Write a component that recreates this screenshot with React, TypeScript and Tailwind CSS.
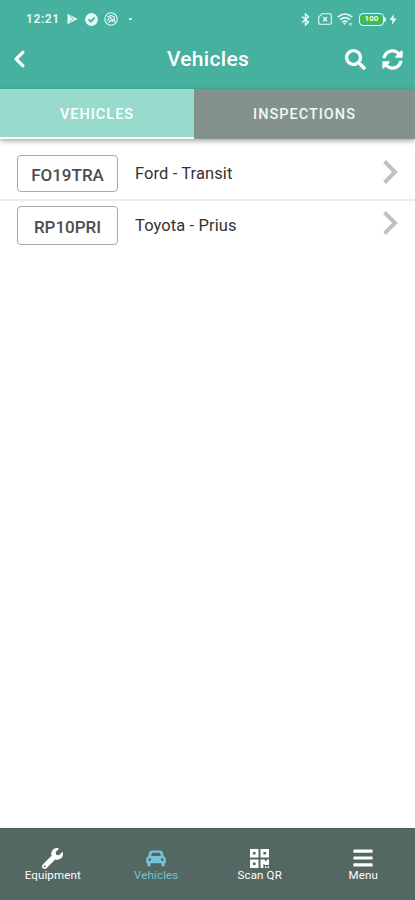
import type { ReactNode } from "react";
import { FaBars, FaChevronLeft, FaSearch, FaSyncAlt, FaWrench } from "react-icons/fa";

type Vehicle = { plate: string; name: string; box: string; row: string; label: string };

const VEHICLES: Vehicle[] = [
  {
    plate: "FO19TRA",
    name: "Ford - Transit",
    box: "h-[37px]",
    row: "h-[62px] border-b-2 border-[#ececec] pt-[16px]",
    label: "h-[39px]",
  },
  {
    plate: "RP10PRI",
    name: "Toyota - Prius",
    box: "h-[39px]",
    row: "h-[52px] pt-[5px]",
    label: "h-[41px]",
  },
];

function StatusBar() {
  return (
    <div className="flex h-[38px] items-center pl-[26px] pr-[18px] text-[#e6fbf5]">
      <span className="w-[34px] whitespace-nowrap text-[12px] font-semibold leading-none tracking-[0.6px]">12:21</span>
      {/* Play store */}
      <svg className="ml-[7px] h-3 w-[11px]" viewBox="0 0 11 12" fill="currentColor">
        <path d="M0.5 0.8 10.8 6 0.5 11.2Z" />
        <path d="M2.5 2.5 6.2 6 2.5 9.5" fill="none" stroke="#45b19e" strokeWidth="0.8" />
      </svg>
      {/* Verified */}
      <svg className="ml-[7px] h-[13px] w-[13px]" viewBox="0 0 13 13">
        <circle cx="6.5" cy="6.5" r="6.4" fill="currentColor" />
        <path d="M3.6 6.4 5.8 8.6 9.7 4.6" fill="none" stroke="#45b19e" strokeWidth="1.8" />
      </svg>
      {/* Aperture */}
      <svg className="ml-[6px] h-[14px] w-[14px]" viewBox="0 0 14 14" fill="none" stroke="currentColor">
        <circle cx="7" cy="7" r="6.2" strokeWidth="1.1" />
        <path d="M3.4 5.2 7 3.4 10.4 5 10.2 8.6M3 8.6 6.4 5.6 11 10M4.4 11 6.2 8.4 9 9.4" strokeWidth="1.2" />
      </svg>
      <span className="ml-[11px] h-[2px] w-[3px] rounded-full bg-current" />

      <div className="ml-auto flex items-center">
        <svg className="h-[13px] w-[9px]" viewBox="0 0 9 13" fill="none" stroke="currentColor" strokeWidth="1.4">
          <path d="M1 3.5 7.5 9 4.5 12V1L7.5 4 1 9.5" />
        </svg>
        {/* No SIM */}
        <svg className="ml-[8px] h-3 w-[14px]" viewBox="0 0 14 12" fill="none" stroke="currentColor">
          <path d="M4.2 0.7H12Q13.3 0.7 13.3 2V10Q13.3 11.3 12 11.3H2Q0.7 11.3 0.7 10V4Z" strokeWidth="1.1" />
          <path d="M5.2 4 9 8.3M9 4 5.2 8.3" strokeWidth="1.3" />
        </svg>
        <svg className="ml-[5px] h-[13px] w-[16px]" viewBox="0 0 16 13" fill="none" stroke="currentColor" strokeWidth="1.5">
          <path d="M0.7 4.1Q8-2 15.3 4.1M3 6.8Q8 2.4 13 6.8M5.2 9.2Q8 6.8 10.5 9" />
          <path d="M6 9.8H9.4L7.7 12Z" fill="currentColor" stroke="none" />
          <path d="M11.8 12.6 15 9.8M12 10 14.6 12.6" strokeWidth="0.9" />
        </svg>
        <div className="ml-[6px] flex h-[13px] w-[25px] items-center rounded-[4px] border-[1.5px] border-current p-px">
          <div className="flex h-full w-full items-center justify-center rounded-[2px] bg-[#48bd2e] text-[8px] font-bold leading-none">
            100
          </div>
        </div>
        <span className="h-[5px] w-[2px] rounded-r-sm bg-current" />
        <svg className="ml-[3px] h-[11px] w-[8px]" viewBox="0 0 7 11" fill="currentColor">
          <path d="M4.6 0 0 6H3L2.3 11 7 4.5H4Z" />
        </svg>
      </div>
    </div>
  );
}

function CarIcon() {
  return (
    <svg className="mt-[1px] h-[17px] w-[20px]" viewBox="0 0 20 17" fill="currentColor" fillRule="evenodd">
      <path d="M5.6 0.5H14.4Q16.2 0.5 16.7 2.3L17.8 6.2Q19.8 6.7 19.8 8.8V13.2H18.6V14.9Q18.6 16.6 17 16.6T15.4 14.9V13.2H4.6V14.9Q4.6 16.6 3 16.6T1.4 14.9V13.2H0.2V8.8Q0.2 6.7 2.2 6.2L3.3 2.3Q3.8 0.5 5.6 0.5ZM6 2.8 5 6.1H15L14 2.8ZM3.7 8.3A1.4 1.4 0 1 0 3.7 11.1 1.4 1.4 0 1 0 3.7 8.3ZM16.3 8.3A1.4 1.4 0 1 0 16.3 11.1 1.4 1.4 0 1 0 16.3 8.3Z" />
    </svg>
  );
}

function QrIcon() {
  return (
    <svg className="h-[19px] w-[19px]" viewBox="0 0 19 19" fill="currentColor" fillRule="evenodd">
      <path d="M0 0H8.5V8.5H0ZM2.9 2.9V5.6H5.6V2.9Z" />
      <path d="M10.5 0H19V8.5H10.5ZM13.4 2.9V5.6H16.1V2.9Z" />
      <path d="M0 10.5H8.5V19H0ZM2.9 13.4V16.1H5.6V13.4Z" />
      <path d="M10.5 10.5H14.4L15.6 12.2H16.6V10.5H19V16H14.8L13.4 14.4V19H10.5ZM15 17.2H16.4V19H15ZM17.5 17.2H19V19H17.5Z" />
    </svg>
  );
}

function NavItem({ icon, label, active }: { icon: ReactNode; label: string; active?: boolean }) {
  return (
    <button className={`flex w-[103.75px] flex-col items-center ${active ? "text-[#75c3d6]" : "text-white"}`}>
      <span className="flex h-[20px] items-center">{icon}</span>
      <span className="mt-px text-[11.5px] leading-[13px] tracking-[0.15px]">{label}</span>
    </button>
  );
}

export default function App() {
  return (
    <div className="flex h-[900px] w-[415px] flex-col overflow-hidden bg-white font-['Roboto',sans-serif]">
      <header className="h-[89px] shrink-0 bg-[#45b19e] text-white">
        <StatusBar />
        <div className="grid h-[42px] grid-cols-[70px_1fr_70px] items-center">
          <button aria-label="Back" className="pl-[11px]">
            <FaChevronLeft className="h-[20px] w-[17px]" />
          </button>
          <h1 className="pl-px text-center text-[21px] font-medium leading-none tracking-[0.3px]">Vehicles</h1>
          <div className="flex items-center">
            <button aria-label="Search">
              <FaSearch className="h-[21px] w-[21px]" />
            </button>
            <button aria-label="Refresh" className="ml-[16px]">
              <FaSyncAlt className="h-[21px] w-[21px]" />
            </button>
          </div>
        </div>
      </header>

      <nav className="z-10 flex h-[50px] shrink-0 text-[14.5px] font-medium tracking-[1px] text-white shadow-[0_2px_5px_rgba(0,0,0,0.35)]">
        <button className="w-[194px] border-b-2 border-white bg-[#98dacc] pt-[3px]">VEHICLES</button>
        <button className="flex-1 bg-[#84928e] pt-[2px] text-[#f1f8f6]">INSPECTIONS</button>
      </nav>

      <main className="flex-1">
        {VEHICLES.map((v) => (
          <div key={v.plate} className={`flex items-start px-[17px] ${v.row}`}>
            <div
              className={`flex w-[101px] items-center justify-center rounded-[4px] border-[1.5px] border-[#a8a8a8] pt-[4px] text-[17px] font-medium text-[#4d4d4d] ${v.box}`}
            >
              {v.plate}
            </div>
            <span className={`ml-[17px] flex items-center text-[16.5px] tracking-[0.1px] text-[#333] ${v.label}`}>
              {v.name}
            </span>
            <svg className="ml-auto mt-[5px] h-[24px] w-[15px]" viewBox="0 0 15 24" fill="none">
              <path d="M1.5 1.5 12 12 1.5 22.5" stroke="#c1c1c1" strokeWidth="4" />
            </svg>
          </div>
        ))}
      </main>

      <footer className="flex h-[72px] shrink-0 border-t border-[#466059] bg-[#536863] pl-px pt-[19px]">
        <NavItem icon={<FaWrench className="h-[21px] w-[21px]" />} label="Equipment" />
        <NavItem icon={<CarIcon />} label="Vehicles" active />
        <NavItem icon={<QrIcon />} label="Scan QR" />
        <NavItem icon={<FaBars className="h-[22px] w-[20px]" />} label="Menu" />
      </footer>
    </div>
  );
}
